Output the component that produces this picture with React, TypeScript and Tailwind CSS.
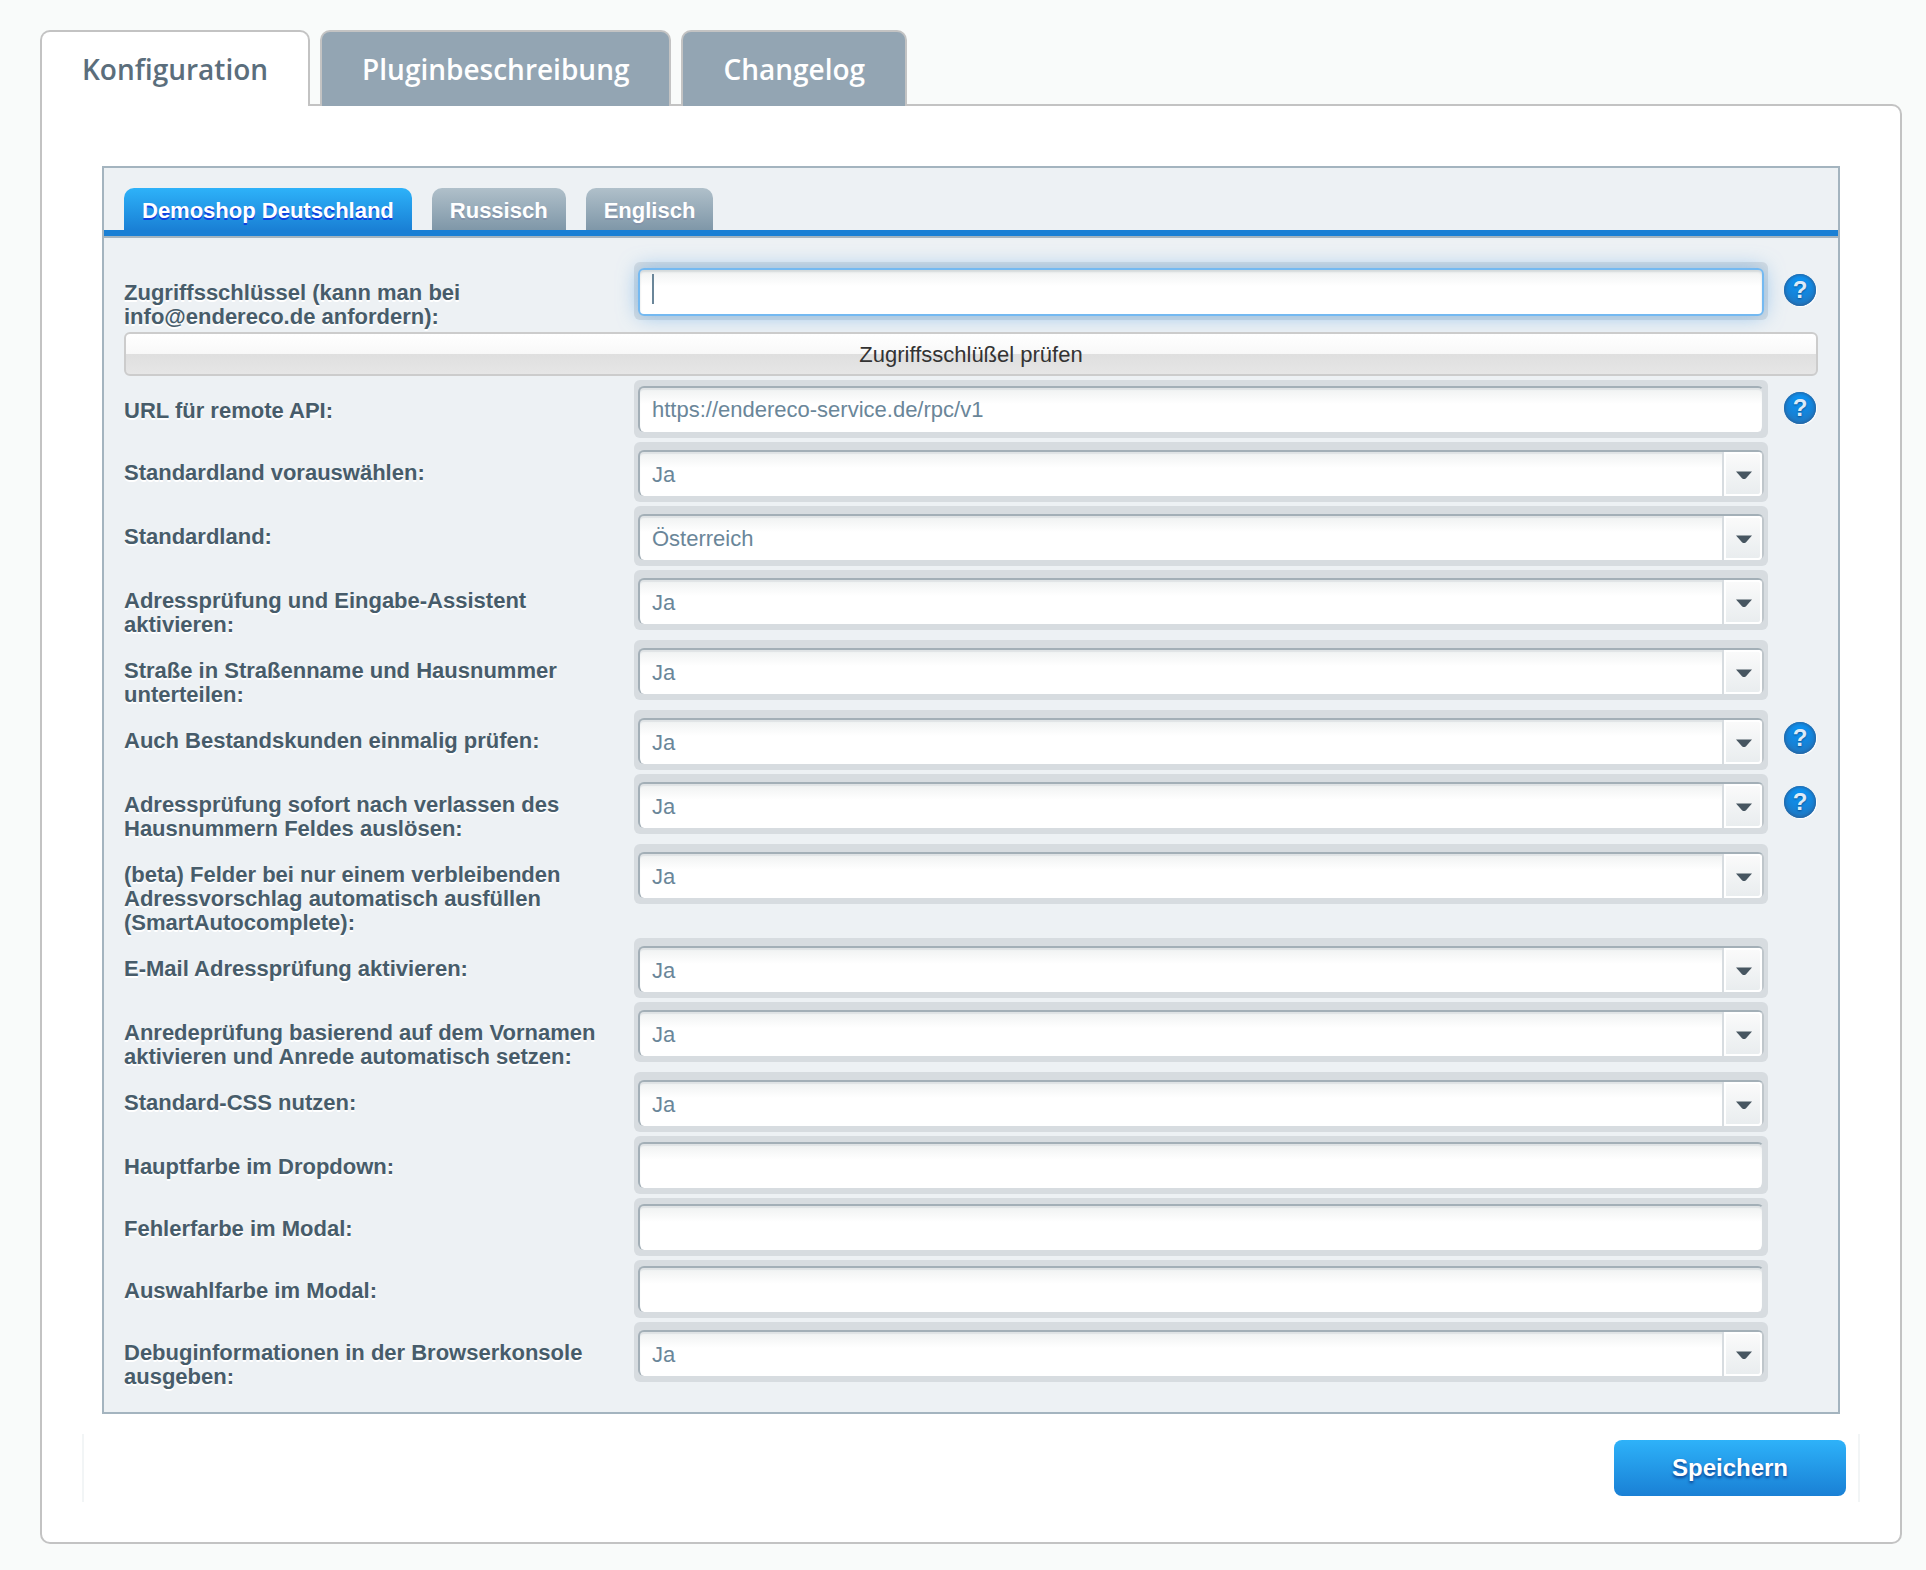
import { useState } from 'react';

type Field = {
  id: string;
  label: string;
  kind: 'text' | 'select';
  value?: string;
  help?: boolean;
};

const fields: Field[] = [
  { id: 'apiUrl', label: 'URL für remote API:', kind: 'text', value: 'https://endereco-service.de/rpc/v1', help: true },
  { id: 'preselect', label: 'Standardland vorauswählen:', kind: 'select', value: 'Ja' },
  { id: 'country', label: 'Standardland:', kind: 'select', value: 'Österreich' },
  { id: 'assistant', label: 'Adressprüfung und Eingabe-Assistent aktivieren:', kind: 'select', value: 'Ja' },
  { id: 'split', label: 'Straße in Straßenname und Hausnummer unterteilen:', kind: 'select', value: 'Ja' },
  { id: 'existing', label: 'Auch Bestandskunden einmalig prüfen:', kind: 'select', value: 'Ja', help: true },
  { id: 'blur', label: 'Adressprüfung sofort nach verlassen des Hausnummern Feldes auslösen:', kind: 'select', value: 'Ja', help: true },
  { id: 'smart', label: '(beta) Felder bei nur einem verbleibenden Adressvorschlag automatisch ausfüllen (SmartAutocomplete):', kind: 'select', value: 'Ja' },
  { id: 'email', label: 'E-Mail Adressprüfung aktivieren:', kind: 'select', value: 'Ja' },
  { id: 'salutation', label: 'Anredeprüfung basierend auf dem Vornamen aktivieren und Anrede automatisch setzen:', kind: 'select', value: 'Ja' },
  { id: 'css', label: 'Standard-CSS nutzen:', kind: 'select', value: 'Ja' },
  { id: 'mainColor', label: 'Hauptfarbe im Dropdown:', kind: 'text' },
  { id: 'errorColor', label: 'Fehlerfarbe im Modal:', kind: 'text' },
  { id: 'selectColor', label: 'Auswahlfarbe im Modal:', kind: 'text' },
  { id: 'debug', label: 'Debuginformationen in der Browserkonsole ausgeben:', kind: 'select', value: 'Ja' },
];

const pageTabs = ['Konfiguration', 'Pluginbeschreibung', 'Changelog'];
const shopTabs = ['Demoshop Deutschland', 'Russisch', 'Englisch'];

function HelpButton() {
  return (
    <button
      type="button"
      aria-label="Hilfe"
      className="mt-3 ml-4 flex size-8 shrink-0 items-center justify-center rounded-full bg-[radial-gradient(circle_at_50%_28%,#0a96f8_0%,#1583d8_50%,#2a70b0_100%)] text-[24px] leading-8 font-bold text-[#dcebf8] shadow-[1px_1px_1px_#ffffff,inset_0_0_3px_1px_#2463a0] [text-shadow:0_1px_2px_#0b4f8f]"
    >
      ?
    </button>
  );
}

function TextField({ id, value, active }: { id: string; value?: string; active?: boolean }) {
  return (
    <div className="rounded-md bg-[#d7dce0] px-1 py-1.5">
      {active ? (
        <div className="-mb-0.5 flex h-12 items-start rounded-md border-2 border-[#74b9f1] bg-[linear-gradient(#eff1f1,#ffffff_16px)] pt-1 pl-3 shadow-[0_0_20px_rgba(82,160,230,0.6),inset_0_2px_2px_#d3d8da]">
          <span className="h-[30px] w-0.5 bg-[#6a8699]" />
          <input id={id} type="text" className="h-9 min-w-0 flex-1 bg-transparent text-[22px] text-[#6a8699] caret-transparent outline-none" />
        </div>
      ) : (
        <input
          id={id}
          type="text"
          defaultValue={value}
          className="block h-[46px] w-full rounded-md border-2 border-t-[#a3afb7] border-r-[#d7dce0] border-b-0 border-l-[#a3afb7] bg-[linear-gradient(#eff1f1,#ffffff_16px)] px-3 text-[22px] text-[#6a8699] shadow-[inset_0_2px_1px_#dfe3e5] outline-none"
        />
      )}
    </div>
  );
}

function SelectField({ id, value }: { id: string; value?: string }) {
  return (
    <div className="rounded-md bg-[#d7dce0] px-1 pt-2 pb-1.5">
      <div className="relative">
        <select
          id={id}
          defaultValue={value}
          className="block h-[46px] w-full appearance-none rounded-md border-2 border-t-[#a3afb7] border-r-[#bfc6cb] border-b-0 border-l-[#a3afb7] bg-[linear-gradient(#eff1f1,#ffffff_16px)] px-3 text-[22px] text-[#6a8699] shadow-[inset_0_2px_1px_#dfe3e5] outline-none"
        >
          <option>{value}</option>
        </select>
        <span className="pointer-events-none absolute top-0.5 right-0.5 bottom-0 flex w-10 items-center justify-center rounded-r border-l-2 border-[#d7dce0] bg-[linear-gradient(#fbfbfb,#e8ecee)] pl-0.5 shadow-[inset_0_0_0_2px_#ffffff]">
          <svg viewBox="0 0 16 9" className="mt-0.5 h-[9px] w-4" aria-hidden="true">
            <path d="M0 0.5 H16 L10 7.2 Q8 9 6 7.2 Z" fill="#475661" />
          </svg>
        </span>
      </div>
    </div>
  );
}

function Row({ field, active }: { field: Field; active?: boolean }) {
  return (
    <div className="flex items-start">
      <label
        htmlFor={field.id}
        className="mr-5 -mb-px w-[490px] shrink-0 pt-[19px] text-[22px] leading-6 font-bold text-[#475c6a] [text-shadow:0_2px_0_#ffffff]"
      >
        {field.label}
      </label>
      <div className="min-w-0 flex-1">
        {field.kind === 'text' ? (
          <TextField id={field.id} value={field.value} active={active} />
        ) : (
          <SelectField id={field.id} value={field.value} />
        )}
      </div>
      <div className="w-[50px] shrink-0">{field.help && <HelpButton />}</div>
    </div>
  );
}

export default function App() {
  const [page, setPage] = useState(0);
  const [shop, setShop] = useState(0);

  return (
    <div className="min-h-screen bg-[#f9fbfa] pt-[30px] pr-6 pb-[26px] pl-10 font-['Liberation_Sans',Arial,sans-serif]">
      <div role="tablist" className="relative flex gap-2.5">
        {pageTabs.map((t, i) => (
          <button
            key={t}
            role="tab"
            aria-selected={page === i}
            onClick={() => setPage(i)}
            className={
              page === i
                ? "-mb-0.5 h-[76px] rounded-t-[10px] border-2 border-b-0 border-[#c3c3c3] bg-white px-10 font-['Open_Sans',sans-serif] text-[28px] font-semibold text-[#5b6e7c]"
                : "-mb-0.5 h-[76px] rounded-t-[10px] border-2 border-b-0 border-[#c3c3c3] bg-[#93a5b3] px-10 font-['Open_Sans',sans-serif] text-[28px] font-semibold text-white"
            }
          >
            {t}
          </button>
        ))}
      </div>

      <main className="rounded-[10px] rounded-tl-none border-2 border-[#c3c3c3] bg-white px-10 pt-[60px] pb-10">
        <section className="mx-5 border-2 border-[#a4b4bf] bg-[#edf1f4]">
          <div role="tablist" className="flex gap-5 border-b-6 border-[#1a80d5] px-5 pt-5">
            {shopTabs.map((t, i) => (
              <button
                key={t}
                role="tab"
                aria-selected={shop === i}
                onClick={() => setShop(i)}
                className={
                  shop === i
                    ? 'h-[42px] rounded-t-[10px] bg-linear-to-b from-[#2eb2f9] to-[#1a80d5] px-[18px] pt-0.5 text-[22px] font-bold text-white [text-shadow:0_2px_0_#0f3fe0]'
                    : 'h-[42px] rounded-t-[10px] bg-linear-to-b from-[#b0c0ca] to-[#7f97a8] px-[18px] pt-0.5 text-[22px] font-bold text-white [text-shadow:0_2px_0_#8494aa]'
                }
              >
                {t}
              </button>
            ))}
          </div>
          <form className="flex flex-col gap-1 border-t-2 border-[#a4b4bf] px-5 pt-6 pb-6" onSubmit={(e) => e.preventDefault()}>
            <Row field={{ id: 'apiKey', label: 'Zugriffsschlüssel (kann man bei info@endereco.de anfordern):', kind: 'text', help: true }} active />
            <button
              type="button"
              className="h-11 w-full rounded-md border-2 border-[#cccccc] bg-[linear-gradient(#ffffff,#f8f8f8_50%,#dfdfdf_50%,#e6e6e6)] text-[22px] text-[#333333]"
            >
              Zugriffsschlüßel prüfen
            </button>
            {fields.map((f) => (
              <Row key={f.id} field={f} />
            ))}
          </form>
        </section>

        <footer className="mt-5 flex justify-end border-x-2 border-[#f2f5f6] py-1.5 pr-3">
          <button
            type="button"
            className="h-14 w-[232px] rounded-lg bg-linear-to-b from-[#2eb2f9] to-[#1a80d5] text-2xl font-bold text-white [text-shadow:0_2px_3px_#0b3f8f]"
          >
            Speichern
          </button>
        </footer>
      </main>
    </div>
  );
}
